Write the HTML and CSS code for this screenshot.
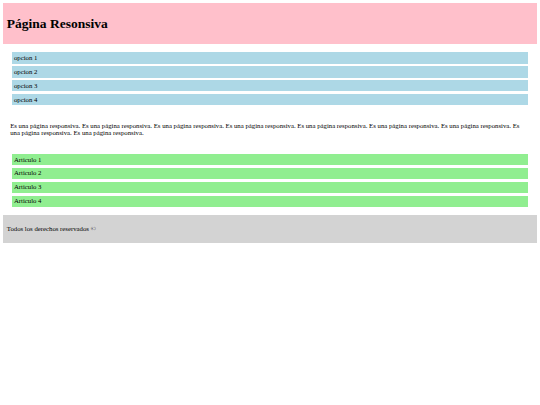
FILE: index.html
```html
<!DOCTYPE html>
<html lang="es">
<head>
<meta charset="utf-8">
<title>Página Resonsiva</title>
<link rel="stylesheet" href="styles.css">
</head>
<body>
<header class="site-header">
  <h1 class="site-title">Página Resonsiva</h1>
</header>
<nav class="menu">
  <ul class="menu-list">
    <li class="menu-item">opcion 1</li>
    <li class="menu-item">opcion 2</li>
    <li class="menu-item">opcion 3</li>
    <li class="menu-item">opcion 4</li>
  </ul>
</nav>
<main class="content">
  <p class="content-text">Es una página responsiva. Es una página responsiva. Es una página responsiva. Es una página responsiva. Es una página responsiva. Es una página responsiva. Es una página responsiva. Es una página responsiva. Es una página responsiva.</p>
</main>
<section class="articles">
  <div class="article">Articulo 1</div>
  <div class="article">Articulo 2</div>
  <div class="article">Articulo 3</div>
  <div class="article">Articulo 4</div>
</section>
<footer class="site-footer">
  <p class="footer-text">Todos los derechos reservados ©</p>
</footer>
</body>
</html>
```

FILE: styles.css
```css
body {
  margin: 3.375px;
  font-family: "Liberation Serif", "Times New Roman", serif;
  font-size: 6.75px;
  line-height: 7.8px;
  color: #000;
  background: #fff;
}

.site-header {
  background: #ffc0cb;
  padding: 3.4px 3.4px 3.8px;
}

.site-title {
  margin: 8.9px 0;
  font-size: 13.5px;
  line-height: 15.5px;
  font-weight: bold;
}

.menu {
  margin: 8.44px;
}

.menu-list {
  list-style: none;
  margin: 0;
  padding: 0;
  display: flex;
  flex-direction: column;
  gap: 2.53px;
}

.menu-item {
  background: #add8e6;
  padding: 1.69px 2.11px;
  line-height: 8px;
}

.content {
  padding: 7.8px 6.75px 8.25px;
}

.content-text {
  margin: 0;
}

.articles {
  margin: 8.44px;
  display: flex;
  flex-direction: column;
  gap: 2.53px;
}

.article {
  background: #90ee90;
  padding: 1.69px 2.11px;
  line-height: 8px;
}

.site-footer {
  background: #d3d3d3;
  padding: 3.375px;
}

.footer-text {
  margin: 6.75px 0;
}
```
